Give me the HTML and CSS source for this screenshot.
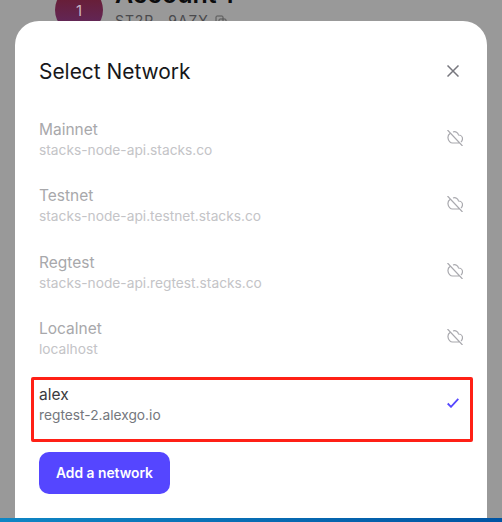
FILE: index.html
```html
<!DOCTYPE html>
<html lang="en">
<head>
<meta charset="utf-8">
<title>Select Network</title>
<link rel="stylesheet" href="styles.css">
</head>
<body>
<div class="backdrop">
  <div class="account">
    <div class="avatar">1</div>
    <div class="account-info">
      <div class="account-name">Account 1</div>
      <div class="account-addr">ST2P...9AZY
        <svg class="copy" viewBox="0 0 12 12" width="12" height="12"><rect x="1" y="1" width="7" height="7" rx="1"/><rect x="4" y="4" width="7" height="7" rx="1"/></svg>
      </div>
    </div>
  </div>
  <div class="modal">
    <div class="header">
      <h1 class="title">Select Network</h1>
      <svg class="close" viewBox="0 0 12 12" width="12" height="12"><path d="M.5.5l11 11M11.5.5l-11 11"/></svg>
    </div>
    <div class="list">
      <div class="row disabled">
        <div><div class="name">Mainnet</div><div class="url">stacks-node-api.stacks.co</div></div>
        <svg class="cloud" viewBox="0 0 16 16" width="16" height="16"><path d="M3 3.500C1.500 4.500.8 6 1 8c.2 3 2.500 5 4.500 5H13M6 2c2.500-1 5 .5 5.500 3 2.200 0 4 1.700 4 3.800 0 1.400-.6 2.500-1.500 3.200M.5 0l15 16"/></svg>
      </div>
      <div class="row disabled">
        <div><div class="name">Testnet</div><div class="url">stacks-node-api.testnet.stacks.co</div></div>
        <svg class="cloud" viewBox="0 0 16 16" width="16" height="16"><path d="M3 3.500C1.500 4.500.8 6 1 8c.2 3 2.500 5 4.500 5H13M6 2c2.500-1 5 .5 5.500 3 2.200 0 4 1.700 4 3.800 0 1.400-.6 2.500-1.500 3.200M.5 0l15 16"/></svg>
      </div>
      <div class="row disabled">
        <div><div class="name">Regtest</div><div class="url">stacks-node-api.regtest.stacks.co</div></div>
        <svg class="cloud" viewBox="0 0 16 16" width="16" height="16"><path d="M3 3.500C1.500 4.500.8 6 1 8c.2 3 2.500 5 4.500 5H13M6 2c2.500-1 5 .5 5.500 3 2.200 0 4 1.700 4 3.800 0 1.400-.6 2.500-1.500 3.200M.5 0l15 16"/></svg>
      </div>
      <div class="row disabled">
        <div><div class="name">Localnet</div><div class="url">localhost</div></div>
        <svg class="cloud" viewBox="0 0 16 16" width="16" height="16"><path d="M3 3.500C1.500 4.500.8 6 1 8c.2 3 2.500 5 4.500 5H13M6 2c2.500-1 5 .5 5.500 3 2.200 0 4 1.700 4 3.800 0 1.400-.6 2.500-1.500 3.200M.5 0l15 16"/></svg>
      </div>
      <div class="row selected">
        <div><div class="name">alex</div><div class="url">regtest-2.alexgo.io</div></div>
        <svg class="check" viewBox="0 0 12 10" width="12" height="10"><path d="M.7 5.500l3.300 3.300L11.300.8"/></svg>
      </div>
    </div>
    <button class="add" type="button">Add a network</button>
  </div>
  <div class="bottom-bar"></div>
</div>
</body>
</html>
```
FILE: styles.css
```css
* { box-sizing: border-box; }
html, body { margin: 0; height: 100%; }
body { font-family: Inter, "Liberation Sans", sans-serif; overflow: hidden; }
.backdrop {
  width: 502px; height: 522px; background: #999999;
  display: flex; flex-direction: column; overflow: hidden;
  padding-left: 15px;
}
.account {
  display: flex; gap: 12px; margin-top: -14px; padding-left: 40px;
  height: 35px; flex: none;
}
.avatar {
  width: 48px; height: 48px; border-radius: 50%; flex: none;
  background: linear-gradient(180deg, #6b1a26, #5f2a66);
  color: #c9b6c4; font-size: 15px; display: flex; align-items: center; justify-content: center;
}
.account-name { font-size: 25px; font-weight: 600; color: #0c0c0d; line-height: 26px; margin-top: -5px; }
.account-addr { font-size: 14px; color: #4a4a4d; line-height: 18px; margin-top: 5px; letter-spacing: .9px; display: flex; align-items: center; gap: 6px; }
.copy { fill: none; stroke: #555; stroke-width: 1; }
.modal {
  width: 472px; height: 497px; flex: none; background: #fff;
  border-radius: 24px 24px 0 0; padding: 0 24px;
}
.header { display: flex; justify-content: space-between; align-items: center; padding-top: 38px; height: 62px; }
.title { margin: 0; font-family: Inter, "Liberation Sans", sans-serif; font-size: 20.900px; font-weight: 400; color: #17171a; }
.close { fill: none; stroke: #77777e; stroke-width: 1.500; margin-right: 4px; }
.list { margin: 29px -10px 0 -8px; display: flex; flex-direction: column; }
.row {
  height: 66.250px; padding: 8px 10px 8px 8px; display: flex; justify-content: space-between; align-items: flex-start;
}
.name { font-size: 15.500px; line-height: 20px; color: #3a3a3e; }
.url { font-size: 13.750px; line-height: 20px; color: #74777d; }
.disabled .name { color: #a8a8ab; }
.disabled .url { color: #c4c4c7; }
.cloud { fill: none; stroke: #a9a9ae; stroke-width: 1.200; margin-top: 10px; }
.selected { height: 65px; border: 3px solid #ff2016; border-radius: 2px; padding: 5px 11px 5px 5px; }
.check { fill: none; stroke: #5546ff; stroke-width: 1.800; margin-top: 13px; }
.add {
  display: block; margin-top: 10px; width: 131px; height: 42px; border: 0;
  border-radius: 10px; background: #5546ff; color: #fff;
  font-family: Inter, "Liberation Sans", sans-serif; font-size: 13.800px; font-weight: 600;
}
.bottom-bar { height: 4px; flex: none; margin-left: -15px; background: linear-gradient(90deg, #0f86c4, #0054a3); }
```
